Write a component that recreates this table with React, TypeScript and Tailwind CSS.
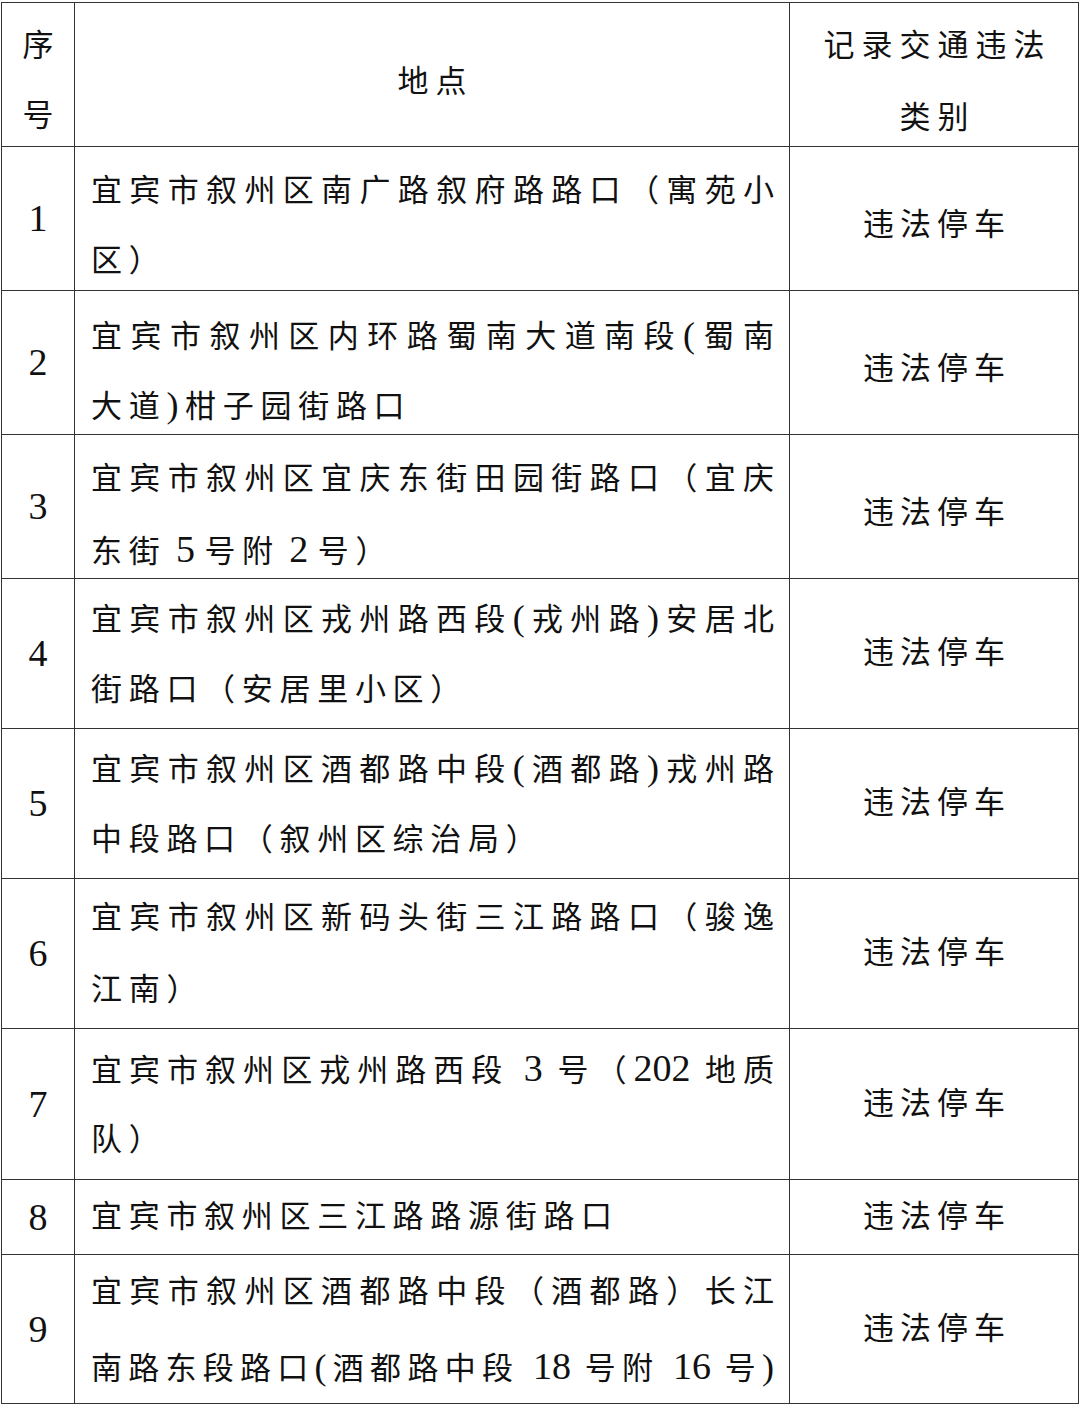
import React from "react";

type Row = {
  n: string;
  h: string;
  pad: string;
  lh: string;
  lines: string[];
  fullLast?: boolean;
};

const rows: Row[] = [
  {
    n: "1",
    h: "h-[143px]",
    pad: "pt-[14px]",
    lh: "h-[70px] leading-[70px]",
    lines: ["宜宾市叙州区南广路叙府路路口（寓苑小", "区）"],
  },
  {
    n: "2",
    h: "h-[143px]",
    pad: "pt-[14px]",
    lh: "h-[70px] leading-[70px]",
    lines: ["宜宾市叙州区内环路蜀南大道南段(蜀南", "大道)柑子园街路口"],
  },
  {
    n: "3",
    h: "h-[143px]",
    pad: "pt-[14px]",
    lh: "h-[70px] leading-[70px]",
    lines: ["宜宾市叙州区宜庆东街田园街路口（宜庆", "东街 5 号附 2 号）"],
  },
  {
    n: "4",
    h: "h-[149px]",
    pad: "pt-0",
    lh: "h-[72px] leading-[72px]",
    lines: ["宜宾市叙州区戎州路西段(戎州路)安居北", "街路口（安居里小区）"],
  },
  {
    n: "5",
    h: "h-[149px]",
    pad: "pt-0",
    lh: "h-[72px] leading-[72px]",
    lines: ["宜宾市叙州区酒都路中段(酒都路)戎州路", "中段路口（叙州区综治局）"],
  },
  {
    n: "6",
    h: "h-[149px]",
    pad: "pt-0",
    lh: "h-[72px] leading-[72px]",
    lines: ["宜宾市叙州区新码头街三江路路口（骏逸", "江南）"],
  },
  {
    n: "7",
    h: "h-[150px]",
    pad: "pt-0",
    lh: "h-[72px] leading-[72px]",
    lines: ["宜宾市叙州区戎州路西段 3 号（202 地质", "队）"],
  },
  {
    n: "8",
    h: "h-[74px]",
    pad: "pt-0",
    lh: "h-[72px] leading-[72px]",
    lines: ["宜宾市叙州区三江路路源街路口"],
  },
  {
    n: "9",
    h: "h-[148px]",
    pad: "pt-0",
    lh: "h-[74px] leading-[74px]",
    lines: ["宜宾市叙州区酒都路中段（酒都路）长江", "南路东段路口(酒都路中段 18 号附 16 号)"],
    fullLast: true,
  },
];

// numbers (with their spaces) stay tight and tall, ascii parens are enlarged
function Seg({ text }: { text: string }) {
  const parts = text.split(/(\s*\d+\s*|[()])/);
  return (
    <>
      {parts.map((p, i) => {
        if (/\d/.test(p))
          return (
            <span key={i} className="tracking-normal text-[38px]">
              {p}
            </span>
          );
        if (p === "(" || p === ")")
          return (
            <span key={i} className="text-[36px]">
              {p}
            </span>
          );
        return <span key={i}>{p}</span>;
      })}
    </>
  );
}

const cell = "border border-[#333] align-top p-0";
const box = "flex flex-col justify-center overflow-visible";

export default function App() {
  return (
    <div
      className="bg-white w-[1080px] h-[1414px] pl-[1px] pt-[2px] text-[#111] overflow-hidden"
      style={{ fontFamily: '"Liberation Serif", "Noto Sans CJK SC", serif' }}
    >
      <table className="table-fixed border-collapse w-[1077px]">
        <colgroup>
          <col className="w-[73px]" />
          <col className="w-[715px]" />
          <col className="w-[289px]" />
        </colgroup>
        <thead>
          <tr>
            <th className={`${cell} font-normal text-[31px]`}>
              <div className={`${box} h-[143px] pt-[12px] items-center`}>
                <div className="h-[70px] leading-[70px]">序</div>
                <div className="h-[70px] leading-[70px]">号</div>
              </div>
            </th>
            <th className={`${cell} font-normal text-[31px]`}>
              <div className={`${box} h-[143px] pt-[16px] pl-[7px] tracking-[7px] text-center`}>地点</div>
            </th>
            <th className={`${cell} font-normal text-[31px]`}>
              <div className={`${box} h-[143px] pt-[14px] pl-[7px] tracking-[7px] text-center`}>
                <div className="h-[72px] leading-[72px]">记录交通违法</div>
                <div className="h-[72px] leading-[72px]">类别</div>
              </div>
            </th>
          </tr>
        </thead>
        <tbody>
          {rows.map((r) => (
            <tr key={r.n}>
              <td className={`${cell} text-center text-[38px]`}>
                <div className={`${box} ${r.h}`}>{r.n}</div>
              </td>
              <td className={`${cell} text-[31px]`}>
                <div className={`${box} ${r.h} ${r.pad} pl-[16px] pr-[13px]`}>
                  {r.lines.map((l, i) => {
                    const full = r.lines.length > 1 && (i < r.lines.length - 1 || r.fullLast);
                    return (
                      <div
                        key={i}
                        className={
                          full
                            ? `${r.lh} shrink-0 whitespace-nowrap tracking-[2px] text-justify [text-align-last:justify]`
                            : `${r.lh} shrink-0 whitespace-nowrap tracking-[6.7px]`
                        }
                      >
                        <Seg text={l} />
                      </div>
                    );
                  })}
                </div>
              </td>
              <td className={`${cell} text-[31px] text-center`}>
                <div className={`${box} ${r.h} ${r.pad} pl-[6px] tracking-[6px]`}>违法停车</div>
              </td>
            </tr>
          ))}
        </tbody>
      </table>
    </div>
  );
}
